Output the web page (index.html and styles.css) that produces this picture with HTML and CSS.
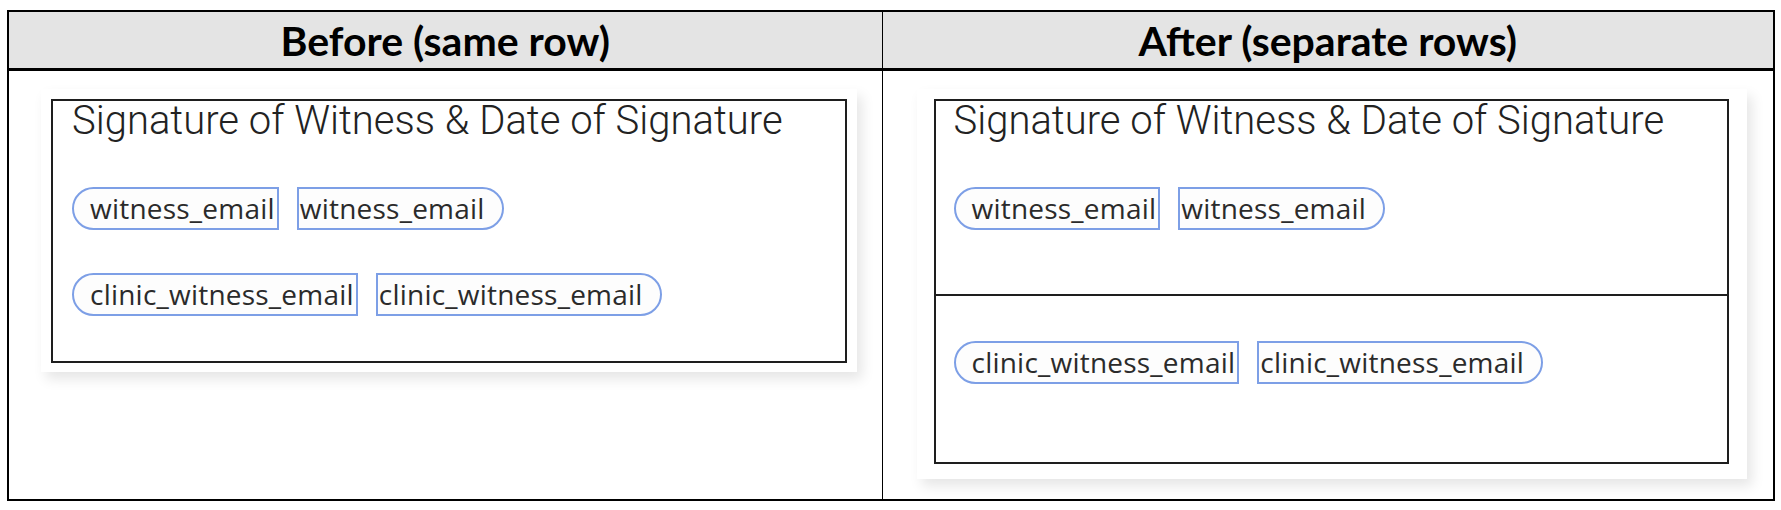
FILE: index.html
```html
<!DOCTYPE html>
<html>
<head>
<meta charset="utf-8">
<link rel="stylesheet" href="styles.css">
</head>
<body>
<table class="cmp">
  <colgroup>
    <col class="col-before">
    <col class="col-after">
  </colgroup>
  <thead>
    <tr>
      <th class="hcell">Before (same row)</th>
      <th class="hcell">After (separate rows)</th>
    </tr>
  </thead>
  <tbody>
    <tr>
      <td class="bcell bcell-left">
        <div class="shot shot-left">
          <div class="box box-left">
            <div class="title">Signature of Witness &amp; Date of Signature</div>
            <div class="pair pair-1">
              <span class="pill pill-l">witness_email</span><span class="pill pill-r">witness_email</span>
            </div>
            <div class="pair pair-2">
              <span class="pill pill-l">clinic_witness_email</span><span class="pill pill-r">clinic_witness_email</span>
            </div>
          </div>
        </div>
      </td>
      <td class="bcell bcell-right">
        <div class="shot shot-right">
          <div class="box box-right">
            <div class="row row-top">
              <div class="title">Signature of Witness &amp; Date of Signature</div>
              <div class="pair pair-1">
                <span class="pill pill-l">witness_email</span><span class="pill pill-r">witness_email</span>
              </div>
            </div>
            <div class="row row-bottom">
              <div class="pair pair-3">
                <span class="pill pill-l">clinic_witness_email</span><span class="pill pill-r">clinic_witness_email</span>
              </div>
            </div>
          </div>
        </div>
      </td>
    </tr>
  </tbody>
</table>
</body>
</html>
```
FILE: styles.css
```css
html, body {
  margin: 0;
  padding: 0;
  background: #ffffff;
}
body {
  padding: 10px 0 0 7px;
}
.cmp {
  border-collapse: collapse;
  width: 1766px;
  height: 491px;
  table-layout: fixed;
  border: 2px solid #000;
}
.col-before {
  width: 874px;
}
.col-after {
  width: 892px;
}
.hcell {
  height: 56px;
  background: #e4e4e4;
  border-bottom: 3px solid #000;
  border-left: 1px solid #000;
  font-family: "Lato", "Liberation Sans", sans-serif;
  font-weight: 700;
  font-size: 41px;
  color: #000;
  text-align: center;
  vertical-align: middle;
  padding: 0;
}
.bcell {
  vertical-align: top;
  padding: 0;
  border-left: 1px solid #000;
}
.bcell-left {
  padding: 18px 0 0 32px;
}
.bcell-right {
  padding: 18px 0 0 34px;
}
.shot {
  display: inline-block;
  background: #fff;
  box-shadow: 5px 7px 12px rgba(0, 0, 0, 0.10);
}
.shot-left {
  padding: 10px 10px 9px 10px;
}
.shot-right {
  padding: 10px 18px 15px 17px;
}
.box {
  border: 2px solid #1e1e1e;
  box-sizing: border-box;
}
.box-left {
  width: 796px;
  height: 264px;
  padding: 0 0 0 19px;
}
.box-right {
  width: 795px;
  height: 365px;
  display: flex;
  flex-direction: column;
}
.row {
  padding-left: 18px;
}
.row-top {
  height: 195px;
  border-bottom: 2px solid #1e1e1e;
  box-sizing: border-box;
}
.row-bottom {
  flex: 1;
}
.title {
  font-family: "Roboto", "Liberation Sans", sans-serif;
  font-weight: 300;
  font-size: 40px;
  line-height: 40px;
  height: 40px;
  color: #222;
  white-space: nowrap;
}
.pair {
  display: flex;
  gap: 18px;
}
.pair-1 {
  margin-top: 46px;
}
.pair-2 {
  margin-top: 43px;
}
.pair-3 {
  margin-top: 45px;
}
.pill {
  display: inline-block;
  height: 43px;
  line-height: 39px;
  box-sizing: border-box;
  border: 2px solid #7d9fe6;
  background: #fdfdfd;
  font-family: "Open Sans", "Liberation Sans", sans-serif;
  font-size: 28px;
  letter-spacing: 0.22px;
  color: #2b2b2b;
  white-space: nowrap;
}
.pill-l {
  border-radius: 22px 0 0 22px;
  padding: 0 2px 0 16px;
}
.pill-r {
  border-radius: 0 22px 22px 0;
  padding: 0 17px 0 1px;
}
```
